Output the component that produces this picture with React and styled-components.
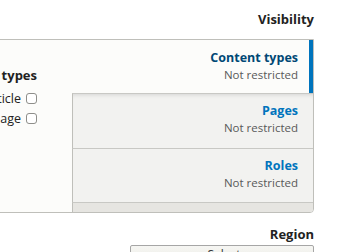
import React from "react";
import styled, { createGlobalStyle } from "styled-components";

const GlobalStyle = createGlobalStyle`
  body {
    margin: 0;
    background: #ffffff;
    font-family: "Open Sans", "Liberation Sans", sans-serif;
    color: #222222;
    overflow: hidden;
  }
`;

const Page = styled.div`
  width: 339px;
  height: 252px;
  padding-right: 25px;
  box-sizing: border-box;
  display: flex;
  flex-direction: column;
  overflow: hidden;
`;

const SectionTitle = styled.div`
  text-align: right;
  font-weight: 700;
  font-size: 13px;
  line-height: 18px;
  color: #222222;
  margin-top: ${(props) => props.top}px;
  margin-bottom: ${(props) => props.bottom}px;
`;

const Tabs = styled.div`
  display: flex;
  flex-shrink: 0;
  margin-left: -140px;
  height: 174px;
  box-sizing: border-box;
  border: 1px solid #bfbfba;
  border-radius: 0 0 4px 0;
  background: #fcfcfa;
`;

const Pane = styled.div`
  flex: 1;
  padding: 26px 35px 0 0;
  text-align: right;
`;

const PaneTitle = styled.div`
  font-weight: 700;
  font-size: 13px;
  line-height: 18px;
  color: #222222;
  margin-bottom: 4px;
`;

const CheckRow = styled.label`
  display: flex;
  justify-content: flex-end;
  align-items: center;
  gap: 5px;
  height: 20px;
  font-size: 12.5px;
  color: #222222;
`;

const Box = styled.span`
  width: 11px;
  height: 11px;
  box-sizing: border-box;
  border: 1px solid #8e8e8a;
  border-radius: 3px;
  background: #ffffff;
`;

const Menu = styled.div`
  width: 241px;
  display: flex;
  flex-direction: column;
`;

const Tab = styled.div`
  height: ${(props) => props.h}px;
  flex-shrink: 0;
  box-sizing: border-box;
  text-align: right;
  padding: ${(props) => (props.selected ? "9px 11px 0 0" : "8px 15px 0 0")};
  background: ${(props) => (props.selected ? "#fcfcfa" : "#f2f2f0")};
  border-right: ${(props) => (props.selected ? "4px solid #0074bd" : "none")};
  border-left: ${(props) => (props.selected ? "none" : "1px solid #bfbfba")};
  border-top: ${(props) => (props.first ? "1px solid #c8c8c4" : "none")};
  border-bottom: ${(props) => (props.selected ? "none" : "1px solid #c8c8c4")};
  box-shadow: ${(props) =>
    props.first ? "inset 0 4px 4px -3px rgba(0, 0, 0, 0.12)" : "none"};
`;

const TabTitle = styled.div`
  font-weight: 700;
  font-size: 12.5px;
  line-height: 17px;
  color: ${(props) => (props.selected ? "#004875" : "#0074bd")};
`;

const TabSummary = styled.div`
  font-size: 11.5px;
  line-height: 17px;
  color: #595959;
`;

const Strip = styled.div`
  flex: 1;
  background: #e6e5e1;
  border-left: 1px solid #bfbfba;
  border-bottom-right-radius: 3px;
`;

const SelectRow = styled.div`
  display: flex;
  justify-content: flex-end;
`;

const Select = styled.div`
  width: 184px;
  height: 26px;
  flex-shrink: 0;
  box-sizing: border-box;
  border: 1px solid #a6a6a6;
  border-radius: 2px;
  background: linear-gradient(#f6f6f3, #e7e7df);
  text-align: center;
  font-size: 12px;
  line-height: 15px;
  padding: 1px 0 0 4px;
  color: #333333;
`;

const tabs = [
  { title: "Content types", summary: "Not restricted", selected: true, h: 53 },
  { title: "Pages", summary: "Not restricted", first: true, h: 56 },
  { title: "Roles", summary: "Not restricted", h: 54 },
];

export default function App() {
  return (
    <>
      <GlobalStyle />
      <Page>
        <SectionTitle top={10} bottom={11}>
          Visibility
        </SectionTitle>
        <Tabs>
          <Pane>
            <PaneTitle>Content types</PaneTitle>
            <CheckRow>
              Article <Box />
            </CheckRow>
            <CheckRow>
              Basic page <Box />
            </CheckRow>
          </Pane>
          <Menu>
            {tabs.map((tab) => (
              <Tab
                key={tab.title}
                selected={tab.selected}
                first={tab.first}
                h={tab.h}
              >
                <TabTitle selected={tab.selected}>{tab.title}</TabTitle>
                <TabSummary>{tab.summary}</TabSummary>
              </Tab>
            ))}
            <Strip />
          </Menu>
        </Tabs>
        <SectionTitle top={12} bottom={2}>
          Region
        </SectionTitle>
        <SelectRow>
          <Select>Select</Select>
        </SelectRow>
      </Page>
    </>
  );
}
